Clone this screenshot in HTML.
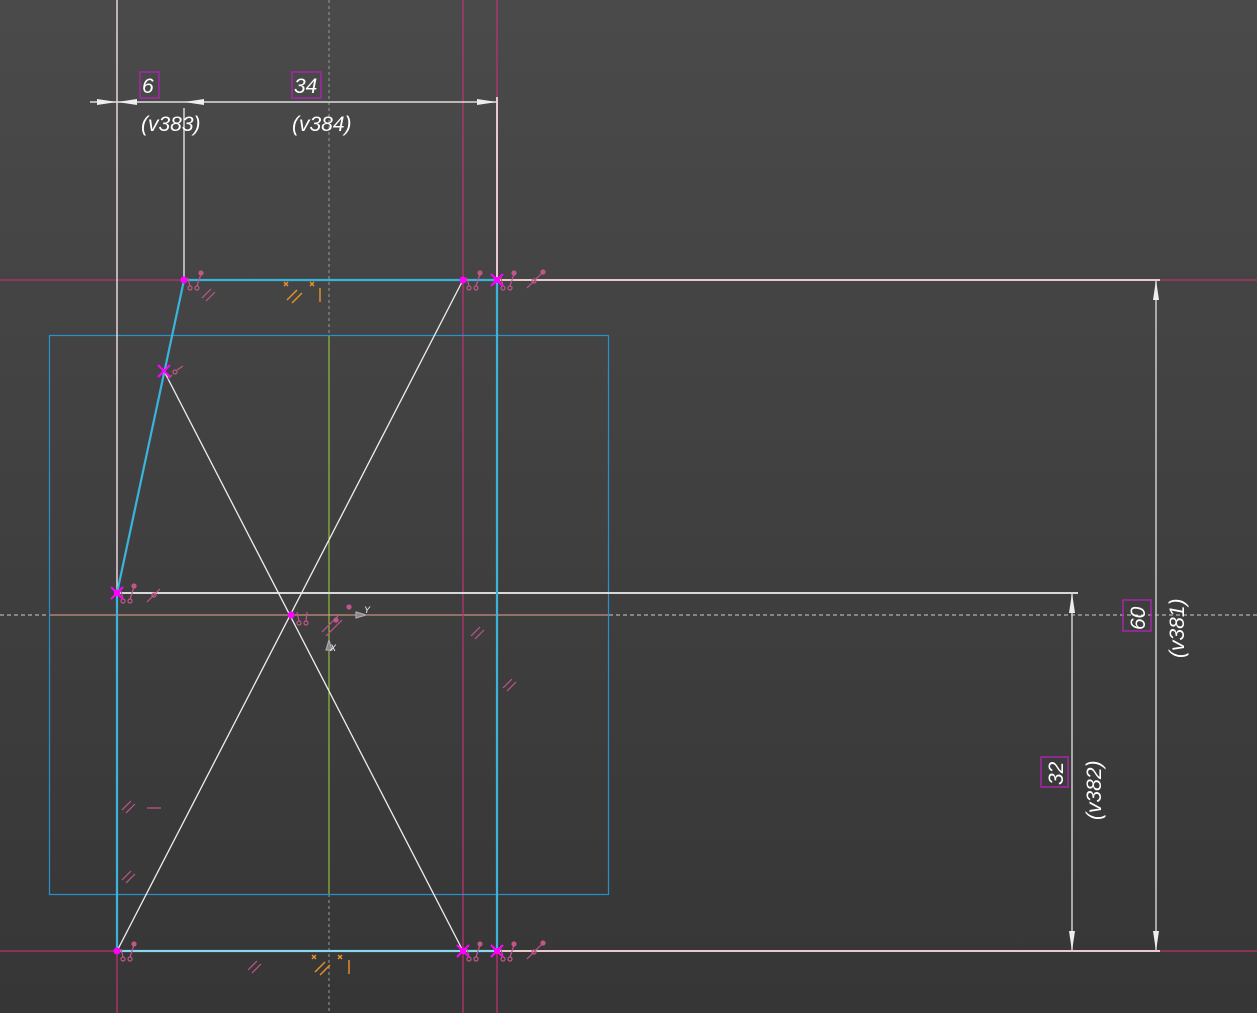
<!DOCTYPE html>
<html><head><meta charset="utf-8"><style>
html,body{margin:0;padding:0;width:1257px;height:1013px;overflow:hidden}
svg{display:block}
text{font-family:"Liberation Sans",sans-serif;font-style:italic;fill:#fff}
</style></head><body>
<svg width="1257" height="1013" viewBox="0 0 1257 1013" xmlns="http://www.w3.org/2000/svg">
<defs>
<linearGradient id="bg" x1="0" y1="0" x2="0" y2="1">
<stop offset="0" stop-color="#4a4a4a"/><stop offset="1" stop-color="#363636"/>
</linearGradient>
<g id="tie" fill="none" stroke="#c0568a" stroke-width="1.2">
<path d="M4 -2 L6 6"/><circle cx="6" cy="8" r="2"/>
<path d="M13 6 L17 -6"/><circle cx="13" cy="8" r="2"/>
<circle cx="17" cy="-7" r="2.6" fill="#c0568a" stroke="none"/>
</g>
<g id="par" stroke="#c0568a" stroke-width="1.2"><path d="M0 8 L9 -1 M4 11 L13 2"/></g>
<g id="xm" stroke="#ff00ff" stroke-width="2"><path d="M-6 -6 L6 6 M-6 6 L6 -6"/><rect x="-3" y="-3" width="6" height="6" fill="#ff00ff" stroke="none"/></g>
</defs>
<rect width="1257" height="1013" fill="url(#bg)"/>

<line x1="0" y1="615" x2="1257" y2="615" stroke="#cfcfcf" stroke-width="1" stroke-dasharray="4 3"/>
<line x1="329" y1="0" x2="329" y2="1013" stroke="#9a9a9a" stroke-width="1" stroke-dasharray="3 3"/>
<line x1="329" y1="335" x2="329" y2="894" stroke="#a6d33c" stroke-width="1"/>
<line x1="49" y1="615" x2="608" y2="615" stroke="#e7a58c" stroke-width="1"/>

<g stroke="#b8336e" stroke-width="1.3">
<line x1="117" y1="0" x2="117" y2="1013"/>
<line x1="463" y1="0" x2="463" y2="1013"/>
<line x1="497" y1="0" x2="497" y2="1013"/>
<line x1="0" y1="280" x2="1257" y2="280"/>
<line x1="0" y1="951" x2="1257" y2="951"/>
</g>

<rect x="49.5" y="335.5" width="559" height="559" fill="none" stroke="#2a8fd0" stroke-width="1.2"/>

<g stroke="#eeeeee" stroke-width="1.3" fill="none">
<line x1="117" y1="0" x2="117" y2="593"/>
<line x1="184" y1="108" x2="184" y2="280"/>
<line x1="117" y1="593" x2="1078" y2="593" stroke="#d8d8d8" stroke-width="2"/>
<line x1="164" y1="371" x2="463" y2="951"/>
<line x1="117" y1="951" x2="463" y2="280"/>
</g>
<g stroke="#e9c8d0" stroke-width="2" fill="none">
<line x1="497" y1="97" x2="497" y2="280"/>
<line x1="497" y1="280" x2="1160" y2="280"/>
<line x1="497" y1="951" x2="1160" y2="951"/>
</g>

<g stroke="#3ab4dc" stroke-width="2.2" fill="none">
<polyline points="117,951 117,593 184,280 497,280 497,951 117,951"/>
</g>
<line x1="117" y1="951" x2="497" y2="951" stroke="#bfe9f5" stroke-width="1.2"/>

<g stroke="#dddddd" stroke-width="1.5" fill="none">
<line x1="90" y1="102" x2="497" y2="102"/>
</g>
<g fill="#eeeeee">
<path d="M117 102 L97 99 L97 105Z"/>
<path d="M117 102 L137 99 L137 105Z"/>
<path d="M184 102 L204 99 L204 105Z"/>
<path d="M497 102 L477 99 L477 105Z"/>
</g>
<rect x="140" y="72" width="19" height="26" fill="none" stroke="#a626a6" stroke-width="1.5"/>
<text x="142" y="93" font-size="21">6</text>
<rect x="292" y="72" width="29" height="26" fill="none" stroke="#a626a6" stroke-width="1.5"/>
<text x="294" y="93" font-size="21">34</text>
<text x="141" y="131" font-size="21">(v383)</text>
<text x="292" y="131" font-size="21">(v384)</text>

<g stroke="#cccccc" stroke-width="1.5">
<line x1="1156" y1="280" x2="1156" y2="951"/>
<line x1="1072" y1="593" x2="1072" y2="951"/>
</g>
<g fill="#eeeeee">
<path d="M1156 280 L1153 300 L1159 300Z"/>
<path d="M1156 951 L1153 931 L1159 931Z"/>
<path d="M1072 593 L1069 613 L1075 613Z"/>
<path d="M1072 951 L1069 931 L1075 931Z"/>
</g>
<rect x="1123" y="600" width="28" height="31" fill="none" stroke="#a626a6" stroke-width="1.5"/>
<text transform="translate(1145,630) rotate(-90)" font-size="21">60</text>
<text transform="translate(1184,658) rotate(-90)" font-size="21">(v381)</text>
<rect x="1041" y="757" width="27" height="30" fill="none" stroke="#a626a6" stroke-width="1.5"/>
<text transform="translate(1063,785) rotate(-90)" font-size="21">32</text>
<text transform="translate(1101,820) rotate(-90)" font-size="21">(v382)</text>

<use href="#tie" x="184" y="280"/>
<use href="#tie" x="463" y="280"/>
<use href="#tie" x="497" y="280"/>
<use href="#tie" x="117" y="593"/>
<use href="#tie" x="117" y="951"/>
<use href="#tie" x="463" y="951"/>
<use href="#tie" x="497" y="951"/>
<g stroke="#c0568a" stroke-width="1.2" fill="none">
<path d="M167 380 L172 375"/><circle cx="175" cy="372" r="2"/><path d="M177 370 L183 366"/>
<path d="M297 612 L299 621"/><circle cx="299" cy="623" r="2"/>
<path d="M307 612 L306 621"/><circle cx="306" cy="623" r="2"/>
<path d="M527 288 L543 272"/><circle cx="534" cy="281" r="2"/><circle cx="543" cy="272" r="2.6" fill="#c0568a" stroke="none"/>
<path d="M527 959 L543 943"/><circle cx="534" cy="952" r="2"/><circle cx="543" cy="943" r="2.6" fill="#c0568a" stroke="none"/>
<path d="M147 602 L160 589"/><circle cx="154" cy="595" r="2"/>
<path d="M147 808 L161 808"/>
<path d="M322 632 L338 616 M326 636 L342 620"/>
<circle cx="336" cy="620" r="2.6" fill="#c0568a" stroke="none"/>
<circle cx="349" cy="607" r="2.6" fill="#c0568a" stroke="none"/>
</g>
<use href="#par" x="202" y="290"/>
<use href="#par" x="471" y="628"/>
<use href="#par" x="503" y="680"/>
<use href="#par" x="122" y="802"/>
<use href="#par" x="122" y="872"/>
<use href="#par" x="248" y="962"/>
<g stroke="#e8942a" stroke-width="1.4" fill="none">
<path d="M284 282 L288 286 M288 282 L284 286"/>
<path d="M310 282 L314 286 M314 282 L310 286"/>
<path d="M287 300 L297 290 M292 303 L302 293"/>
<path d="M320 288 L320 302"/>
<path d="M312 955 L316 959 M316 955 L312 959"/>
<path d="M338 955 L342 959 M342 955 L338 959"/>
<path d="M315 972 L325 962 M320 975 L330 965"/>
<path d="M349 960 L349 974"/>
</g>
<g stroke="#aaaaaa" stroke-width="1.2" fill="none">
<path d="M356 612 L366 615 L356 618Z" fill="#888"/>
<text x="364" y="613" font-size="9" fill="#bbb" stroke="none" font-style="normal">Y</text>
<path d="M329 640 L332 650 L326 650Z" fill="#888"/>
<text x="330" y="651" font-size="9" fill="#bbb" stroke="none" font-style="normal">X</text>
</g>

<g fill="#ff00ff">
<circle cx="184" cy="280" r="3.5"/>
<circle cx="463" cy="280" r="3.5"/>
<circle cx="291" cy="615" r="3.5"/>
<circle cx="117" cy="951" r="3.5"/>
</g>
<use href="#xm" x="497" y="280"/>
<use href="#xm" x="117" y="593"/>
<use href="#xm" x="463" y="951"/>
<use href="#xm" x="497" y="951"/>
<g stroke="#ff00ff" stroke-width="2"><path d="M158 365 L170 377 M158 377 L170 365"/></g>
</svg>
</body></html>
